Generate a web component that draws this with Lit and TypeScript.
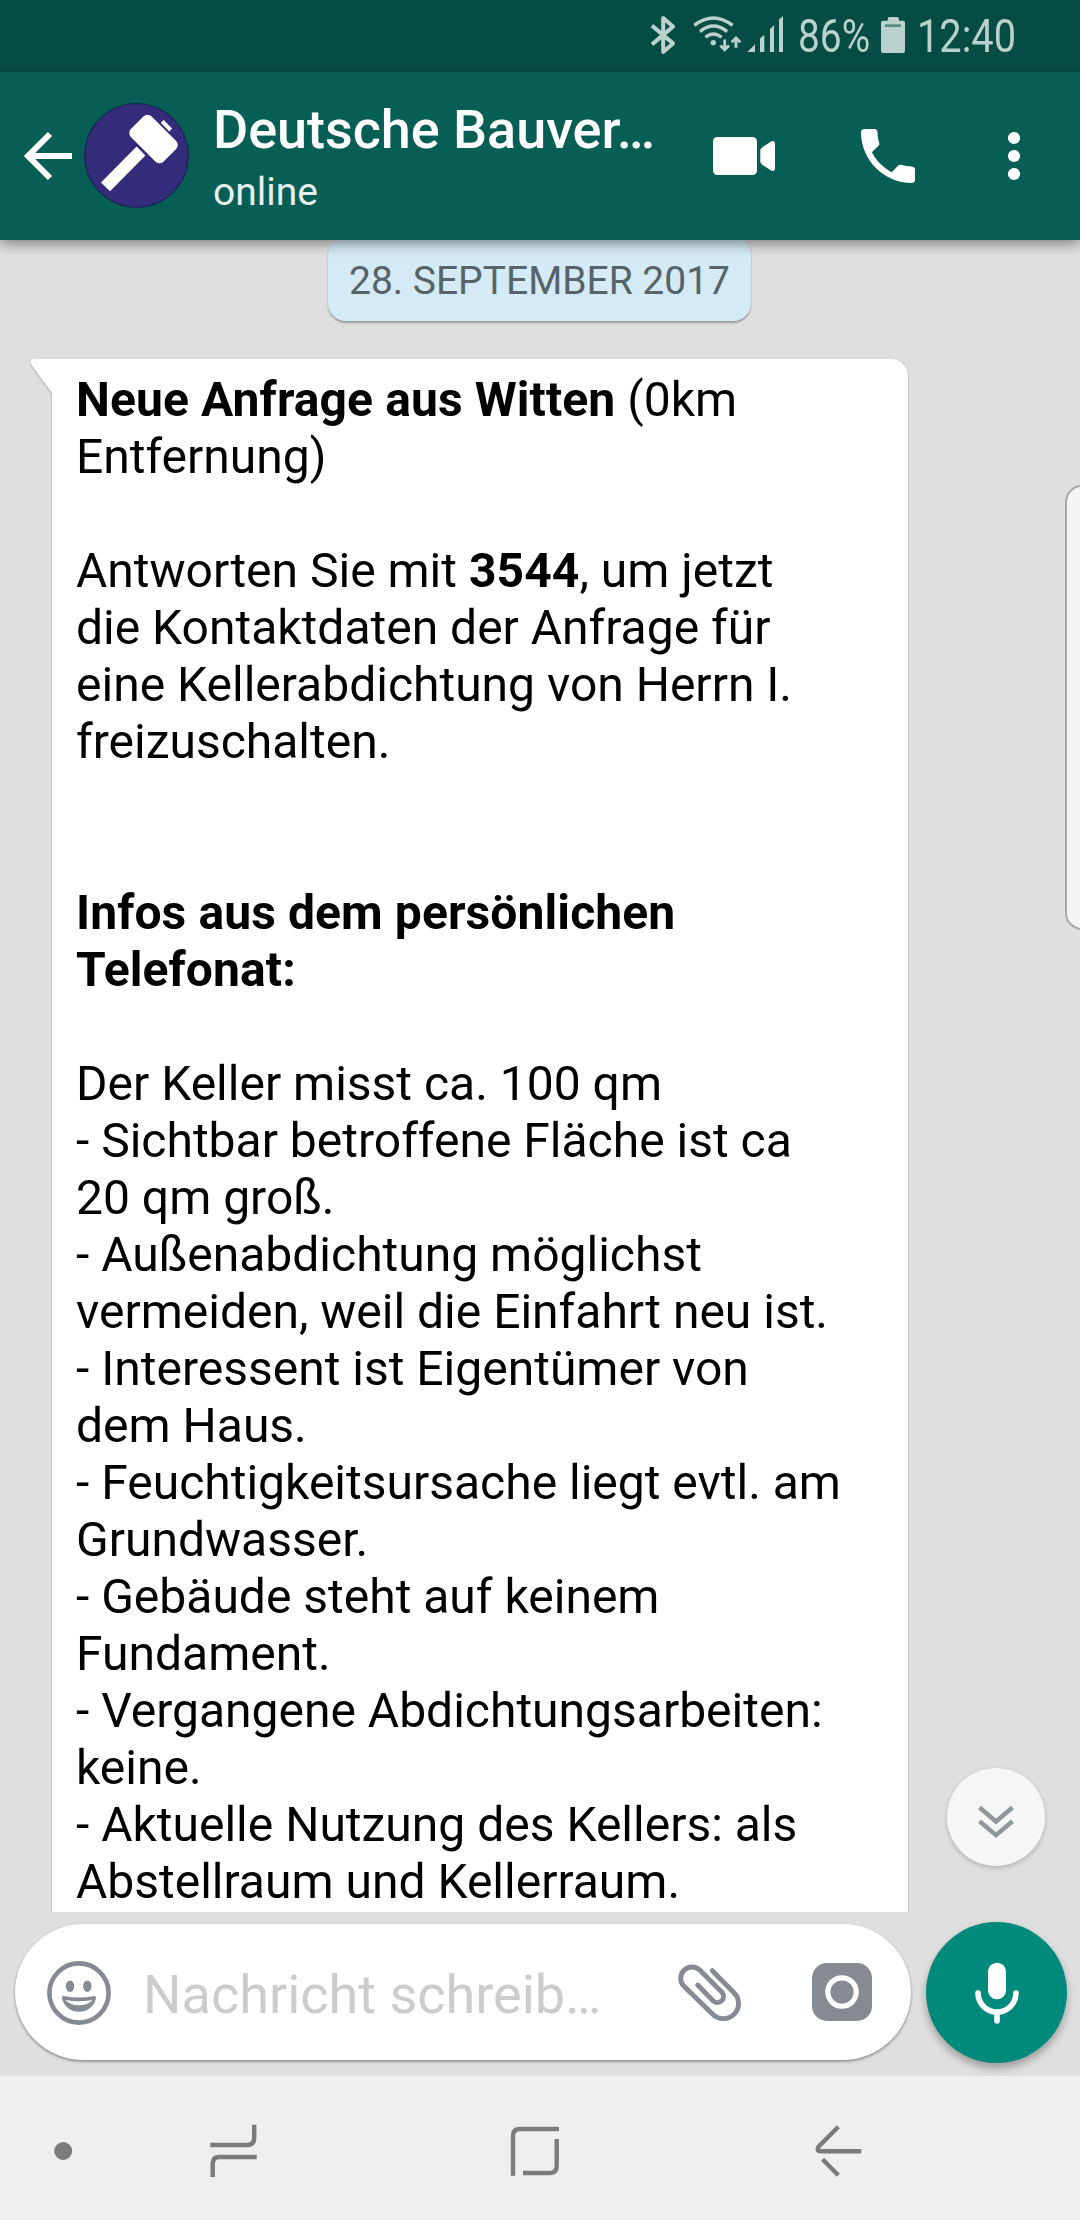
import { LitElement, html, css, svg, nothing } from "lit";
import { customElement, property } from "lit/decorators.js";

type Line = { text: string; bold?: boolean }[];

const t = (text: string): Line => [{ text }];
const b = (text: string): Line => [{ text, bold: true }];

const MESSAGE: Line[] = [
  [{ text: "Neue Anfrage aus Witten", bold: true }, { text: " (0km" }],
  t("Entfernung)"),
  t(""),
  [{ text: "Antworten Sie mit " }, { text: "3544", bold: true }, { text: ", um jetzt" }],
  t("die Kontaktdaten der Anfrage für"),
  t("eine Kellerabdichtung von Herrn I."),
  t("freizuschalten."),
  t(""),
  t(""),
  b("Infos aus dem persönlichen"),
  b("Telefonat:"),
  t(""),
  t("Der Keller misst ca. 100 qm"),
  t("- Sichtbar betroffene Fläche ist ca"),
  t("20 qm groß."),
  t("- Außenabdichtung möglichst"),
  t("vermeiden, weil die Einfahrt neu ist."),
  t("- Interessent ist Eigentümer von"),
  t("dem Haus."),
  t("- Feuchtigkeitsursache liegt evtl. am"),
  t("Grundwasser."),
  t("- Gebäude steht auf keinem"),
  t("Fundament."),
  t("- Vergangene Abdichtungsarbeiten:"),
  t("keine."),
  t("- Aktuelle Nutzung des Kellers: als"),
  t("Abstellraum und Kellerraum."),
];

@customElement("status-bar")
export class StatusBar extends LitElement {
  static styles = css`
    :host {
      display: flex;
      justify-content: flex-end;
      height: 72px;
      padding-right: 60px;
      background: #054c44;
      color: #bbd1ce;
    }
    svg { display: block; flex: none; fill: currentColor; }
    .line { fill: none; stroke: currentColor; }
    .level { fill: #5b8a83; }
    .label {
      flex: none;
      box-sizing: border-box;
      padding-top: 9px;
      font: 400 46px/54px Roboto, sans-serif;
      white-space: nowrap;
    }
    .percent { width: 84px; padding-left: 7.5px; }
    .clock { width: 108px; padding-left: 5px; }
    .narrow { display: inline-block; transform-origin: 0 50%; }
    .percent .narrow { transform: scaleX(0.845); }
    .clock .narrow { transform: scaleX(0.865); }
  `;
  render() {
    return html`
      <svg width="40" height="72" viewBox="646 0 40 72">
        <path class="line" stroke-width="4" stroke-linejoin="round" d="M652 25.6 673 43.4 663.2 52V18L673 26.6 652 44.4" />
      </svg>
      <svg width="58" height="72" viewBox="686 0 58 72">
        <path class="line" stroke-width="3.4" d="M694.3 25.3Q713.4 10.5 732.6 25.3M700 31.6Q713.4 20.5 727.2 31.6M705.4 37.3Q713.4 30.5 721.6 37.3" />
        <circle cx="713.3" cy="42.8" r="2.7" />
        <path class="line" stroke-width="2.9" d="M724.7 39.5V50M720.4 45.5l4.3 4.3 4.3-4.3M736 47.7V38M731.7 42.3l4.3-4.3 4.3 4.3" />
      </svg>
      <svg width="46" height="72" viewBox="744 0 46 72">
        <path d="M747.5 52H755V44.3ZM760 52V38.6L764.3 34.8V52ZM770 52V29L774 25.3V52ZM779 52V19.6L783 16V52Z" />
      </svg>
      <div class="label percent"><span class="narrow">86%</span></div>
      <svg width="38" height="72" viewBox="874 0 38 72">
        <path d="M887.7 20.7V19a2 2 0 0 1 2-2H897a2 2 0 0 1 2 2v1.7h4a2 2 0 0 1 2 2V51a2 2 0 0 1-2 2H883a2 2 0 0 1-2-2V22.7a2 2 0 0 1 2-2Z" />
        <path class="level" d="M885 24.3H901V27H885Z" />
      </svg>
      <div class="label clock"><span class="narrow">12:40</span></div>
    `;
  }
}

@customElement("chat-header")
export class ChatHeader extends LitElement {
  static styles = css`
    :host {
      display: flex;
      align-items: center;
      height: 168px;
      background: #075e54;
      color: #fff;
      box-shadow: 0 4px 12px rgba(0, 0, 0, 0.42);
      position: relative;
      z-index: 2;
      font-family: Roboto, sans-serif;
    }
    svg { display: block; flex: none; fill: currentColor; }
    .line { fill: none; stroke: currentColor; }
    .disc { fill: #342b7b; stroke: #1b2a55; }
    .names { width: 467px; padding-left: 20px; height: 168px; box-sizing: border-box; }
    .title { margin-top: 26px; font-size: 54px; line-height: 64px; font-weight: 500; letter-spacing: -0.05px; white-space: nowrap; }
    .sub { margin-top: 7px; font-size: 39px; line-height: 46px; color: #e6efee; }
  `;
  render() {
    return html`
      <svg width="80" height="168" viewBox="0 72 80 168">
        <path class="line" stroke-width="6" d="M72 156H28M50 134 28 156 50 178" />
      </svg>
      <svg width="113" height="168" viewBox="80 72 113 168">
        <circle class="disc" stroke-width="1.6" cx="136.5" cy="155.5" r="51.7" />
        <rect x="130.5" y="124.5" width="46" height="29" rx="5.5" transform="rotate(45 153.5 139)" />
        <path d="M136.6 146.6 145.4 155.4 110 191.2 101 182.4Z" />
        <path class="line" stroke-width="4" d="M162.2 121.4 170.7 130" />
      </svg>
      <div class="names">
        <div class="title">Deutsche Bauver…</div>
        <div class="sub">online</div>
      </div>
      <svg width="140" height="168" viewBox="660 72 140 168">
        <rect x="713" y="137" width="44" height="38" rx="4.5" />
        <path d="M760.3 150.5a4 4 0 0 1 1.5-2.8L771 141.6c2-1.2 4-.2 4 1.8V168.6c0 2-2 3-4 1.8L761.8 164.3a4 4 0 0 1-1.5-2.8Z" />
      </svg>
      <svg width="160" height="168" viewBox="800 72 160 168">
        <path transform="translate(852 120) scale(3)" d="M6.62 10.79c1.44 2.83 3.76 5.14 6.59 6.59l2.2-2.2c.27-.27.67-.36 1.02-.24 1.12.37 2.33.57 3.57.57.55 0 1 .45 1 1V20c0 .55-.45 1-1 1-9.39 0-17-7.61-17-17 0-.55.45-1 1-1h3.5c.55 0 1 .45 1 1 0 1.25.2 2.45.57 3.57.11.35.03.74-.25 1.02l-2.2 2.2z" />
      </svg>
      <svg width="120" height="168" viewBox="960 72 120 168">
        <circle cx="1014" cy="138" r="6.1" /><circle cx="1014" cy="156" r="6.1" /><circle cx="1014" cy="174" r="6.1" />
      </svg>
    `;
  }
}

@customElement("message-bubble")
export class MessageBubble extends LitElement {
  @property({ attribute: false }) lines: Line[] = [];
  static styles = css`
    :host {
      display: flex;
      margin-left: 30px;
      filter: drop-shadow(0 1.5px 1px rgba(0, 0, 0, 0.28));
    }
    .tail { display: block; flex: none; fill: #fff; }
    .body {
      width: 856px;
      box-sizing: border-box;
      padding: 12px 24px 60px;
      background: #fff;
      border-radius: 0 17px 0 0;
      color: #000;
      font: 400 48px/57px Roboto, sans-serif;
    }
    .line { min-height: 57px; white-space: pre; }
    .strong { font-weight: 700; letter-spacing: 0.1px; }
  `;
  render() {
    return html`
      <svg class="tail" width="22" height="40" viewBox="0 0 22 40">
        <path d="M22 0H4C1 0 0 3.5 1.5 6L22 34Z" />
      </svg>
      <div class="body">
        ${this.lines.map(
          (line) => html`<div class="line">${line.map((r) =>
            r.bold ? html`<span class="strong">${r.text}</span>` : r.text || nothing
          )}</div>`
        )}
      </div>
    `;
  }
}

@customElement("message-composer")
export class MessageComposer extends LitElement {
  static styles = css`
    :host {
      display: flex;
      height: 164px;
      box-sizing: border-box;
      padding: 10px 13px 0 15px;
      background: #dfdfdf;
      color: #868b91;
      position: relative;
      overflow: hidden;
    }
    svg { display: block; flex: none; fill: currentColor; }
    .line { fill: none; stroke: currentColor; }
    .cut { fill: #fff; }
    .ring { fill: none; stroke: #fff; }
    .pill {
      display: flex;
      width: 896px;
      height: 136px;
      margin-top: 2px;
      border-radius: 68px;
      background: #fff;
      box-shadow: 0 1.5px 3px rgba(0, 0, 0, 0.4);
    }
    .hint {
      flex: 1;
      font: 400 54px/64px Roboto, sans-serif;
      padding-top: 39px;
      color: #ccc;
      white-space: nowrap;
    }
    .mic {
      width: 141px;
      height: 141px;
      margin-left: 15px;
      border-radius: 50%;
      background: #008a7b;
      color: #fff;
      box-shadow: 0 5px 9px rgba(0, 0, 0, 0.3);
    }
  `;
  render() {
    return html`
      <div class="pill">
        <svg width="128" height="136" viewBox="15 1924 128 136">
          <circle class="line" stroke-width="4.6" cx="79" cy="1993" r="29.6" />
          <ellipse cx="70" cy="1986.2" rx="4.2" ry="5.7" /><ellipse cx="87.3" cy="1986.2" rx="4.2" ry="5.7" />
          <path d="M64 1996Q79 1999 94 1996Q96.2 1995.8 96 1998C94.5 2006 88 2011.7 79 2011.7S63.5 2006 62 1998Q61.8 1995.8 64 1996Z" />
          <path class="cut" d="M65.5 2000Q79 2002.5 92.5 2000Q88 2005.3 79 2005.3T65.5 2000Z" />
        </svg>
        <div class="hint">Nachricht schreib…</div>
        <svg width="100" height="136" viewBox="660 1924 100 136">
          <path class="line" stroke-width="4.9" stroke-linecap="round" d="M712.3 1970.7 734 1992.7A15 15 0 0 1 712.7 2014.3L684 1986.3A11.3 11.3 0 0 1 700 1970.3L722 1992.3A6.2 6.2 0 0 1 713.2 2001L697.7 1985" />
        </svg>
        <svg width="151" height="136" viewBox="760 1924 151 136">
          <rect x="812" y="1963" width="60" height="58" rx="15" />
          <circle class="ring" stroke-width="5.2" cx="842" cy="1992" r="14.2" />
        </svg>
      </div>
      <svg class="mic" viewBox="926 1922 141 141">
        <rect x="988" y="1962.7" width="18" height="36.6" rx="9" />
        <path class="line" stroke-width="5.6" stroke-linecap="round" d="M978 1993A19 19 0 0 0 1016 1993M997 2012V2021" />
      </svg>
    `;
  }
}

@customElement("nav-bar")
export class NavBar extends LitElement {
  static styles = css`
    :host { display: flex; height: 144px; background: #efefef; color: #7b7b7b; }
    svg { display: block; fill: none; stroke: currentColor; stroke-width: 4.4px; }
    .dot { fill: currentColor; stroke: none; }
  `;
  render() {
    return html`
      <svg width="126" height="144" viewBox="0 2076 126 144"><circle class="dot" cx="63.2" cy="2151" r="9" /></svg>
      <svg width="214" height="144" viewBox="126 2076 214 144">
        <path d="M210.3 2145H247Q254.2 2145 254.2 2138V2124.7M256.7 2157H219Q212.7 2157 212.7 2164V2177" />
      </svg>
      <svg width="390" height="144" viewBox="340 2076 390 144">
        <path d="M559 2129H520Q513 2129 513 2136V2175.7M556.7 2139V2166Q556.7 2173 550 2173H523" />
      </svg>
      <svg width="220" height="144" viewBox="730 2076 220 144">
        <path d="M838.3 2126.8 818.3 2147Q816.5 2151.2 820 2151.2H861.3M822.5 2159.2 838.3 2175.2" />
      </svg>
    `;
  }
}

@customElement("app-root")
export class AppRoot extends LitElement {
  static styles = css`
    :host {
      display: flex;
      flex-direction: column;
      width: 1080px;
      height: 2220px;
      overflow: hidden;
      background: #dfdfdf;
    }
    .chat {
      position: relative;
      flex: 1;
      min-height: 0;
      overflow: hidden;
      background: #dfdfdf;
    }
    .date {
      display: flex;
      justify-content: center;
      width: 423px;
      height: 84px;
      margin: -3px 0 38px 328px;
      border-radius: 18px;
      background: #d4eaf4;
      box-shadow: 0 1.5px 2px rgba(0, 0, 0, 0.3);
      color: #566368;
      font: 400 39px/46px Roboto, sans-serif;
      box-sizing: border-box;
      padding-top: 21px;
      white-space: nowrap;
    }
    .thumb {
      position: absolute;
      left: 1065px;
      top: 245px;
      width: 40px;
      height: 445px;
      box-sizing: border-box;
      border: 2px solid #a9a9a9;
      border-radius: 17px;
      background: #f5f5f5;
    }
    .jump {
      position: absolute;
      left: 947px;
      top: 1528px;
      width: 98px;
      height: 98px;
      border-radius: 50%;
      background: #f6f6f6;
      box-shadow: 0 2px 5px rgba(0, 0, 0, 0.2);
      fill: none;
      stroke: #8f979b;
    }
  `;
  render() {
    return html`
      <status-bar></status-bar>
      <chat-header></chat-header>
      <div class="chat">
        <div class="date">28. SEPTEMBER 2017</div>
        <message-bubble .lines=${MESSAGE}></message-bubble>
        <div class="thumb"></div>
        <svg class="jump" viewBox="947 1768 98 98">
          ${[0, 13.7].map(
            (dy) => svg`<path stroke-width="4.4" transform="translate(0 ${dy})" d="M979.5 1807.5 996 1821.5 1012.5 1807.5" />`
          )}
        </svg>
      </div>
      <message-composer></message-composer>
      <nav-bar></nav-bar>
    `;
  }
}
